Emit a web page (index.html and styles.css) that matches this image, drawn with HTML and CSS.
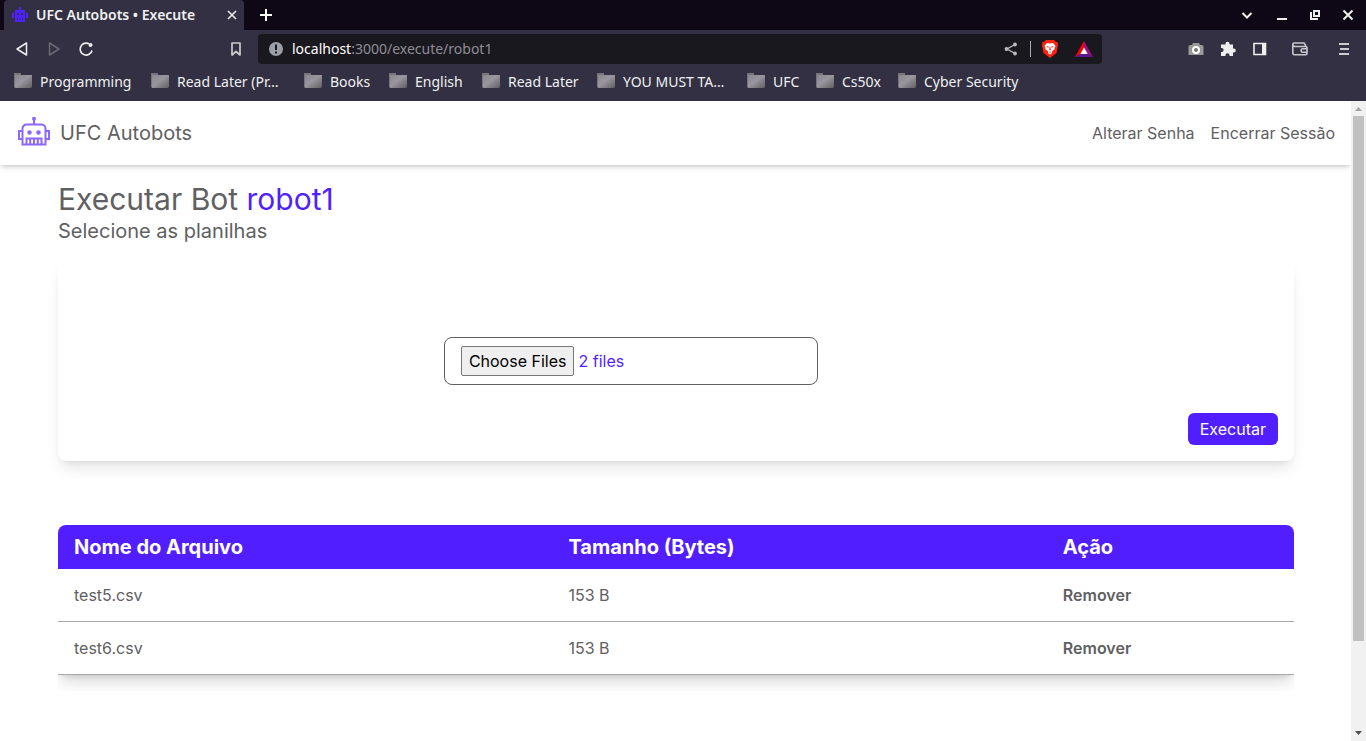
FILE: index.html
```html
<!DOCTYPE html>
<html lang="pt-BR">
<head>
<meta charset="utf-8">
<title>UFC Autobots • Execute</title>
<link rel="stylesheet" href="styles.css">
</head>
<body>
<svg class="defs" width="0" height="0" aria-hidden="true">
  <defs>
    <linearGradient id="folder-fill" x1="0" y1="0" x2="1" y2="1"><stop offset="0" stop-color="#8a8790"/><stop offset=".45" stop-color="#99969f"/><stop offset="1" stop-color="#5f5e5f"/></linearGradient>
    <symbol id="folder" viewBox="0 0 18 16"><path d="M0 0h7v2h10v13H1L0 14z" fill="#77757b"/><path d="M1 2h17V14l-1 1H1z" fill="url(#folder-fill)"/></symbol>
  </defs>
</svg>
<header class="browser">
  <div class="tabs">
    <div class="tab">
      <svg width="16" height="16" viewBox="0 0 16 16" fill="#4f1fff"><path d="M7 0h2v3h4v12H3V3h4zM0 6h2v5H0zM14 6h2v5h-2z"/><path d="M5 6h2v2H5zM9 6h2v2H9zM5 11h1v2H5zM7.500 11h1v2h-1zM10 11h1v2h-1z" fill="#302b68"/></svg>
      <span class="tab-title">UFC Autobots • Execute</span>
      <button class="icon-btn" aria-label="Close tab"><svg width="10" height="10" viewBox="0 0 10 10" fill="none" stroke="#eee" stroke-width="1.600"><path d="M1 1l8 8M9 1L1 9"/></svg></button>
    </div>
    <button class="icon-btn new-tab" aria-label="New tab"><svg width="12" height="12" viewBox="0 0 12 12" stroke="#fff" stroke-width="2"><path d="M6 0v12M0 6h12"/></svg></button>
    <div class="window-controls">
      <button class="icon-btn" aria-label="Tabs"><svg width="12" height="12" viewBox="0 0 12 12" fill="none" stroke="#eee" stroke-width="2"><path d="M1.500 4L6 8.500 10.500 4"/></svg></button>
      <button class="icon-btn" aria-label="Minimize"><svg width="12" height="12" viewBox="0 0 12 12" fill="#eee"><path d="M1 9h10v2H1z"/></svg></button>
      <button class="icon-btn" aria-label="Restore"><svg width="12" height="12" viewBox="0 0 12 12" fill="none" stroke="#eee" stroke-width="2"><path d="M5 2h5v5H5z"/><path d="M2 3v7h7"/></svg></button>
      <button class="icon-btn" aria-label="Close"><svg width="12" height="12" viewBox="0 0 12 12" fill="none" stroke="#eee" stroke-width="2"><path d="M1.500 1.500l9 9M10.500 1.500l-9 9"/></svg></button>
    </div>
  </div>
  <div class="toolbar">
    <div class="nav-buttons">
      <button class="icon-btn" aria-label="Back"><svg width="16" height="16" viewBox="0 0 16 16" fill="none" stroke="#eee" stroke-width="1.500" stroke-linejoin="round"><path d="M12.500 2v12L3 8z"/></svg></button>
      <button class="icon-btn" aria-label="Forward"><svg width="16" height="16" viewBox="0 0 16 16" fill="none" stroke="#6b6976" stroke-width="1.500" stroke-linejoin="round"><path d="M3.500 2v12L13 8z"/></svg></button>
      <button class="icon-btn" aria-label="Reload"><svg width="16" height="16" viewBox="0 0 16 16" fill="none" stroke="#eee" stroke-width="1.700"><path d="M11 2.800A6 6 0 1 0 14 9.500"/><circle cx="12.500" cy="4" r="2" fill="#eee" stroke="none"/></svg></button>
      <button class="icon-btn bookmark-btn" aria-label="Bookmark"><svg width="16" height="16" viewBox="0 0 16 16" fill="none" stroke="#ccc" stroke-width="1.700" stroke-linejoin="round"><path d="M4 2h8v12l-4-3.500L4 14z"/></svg></button>
    </div>
    <div class="url-bar">
      <svg width="14" height="14" viewBox="0 0 14 14"><circle cx="7" cy="7" r="7" fill="#9ca0a8"/><path d="M6 2.500h2v5.500H6zM6 9.500h2v2H6z" fill="#1a181f"/></svg>
      <span class="url"><b>localhost</b>:3000/execute/robot1</span>
      <button class="icon-btn" aria-label="Share"><svg width="14" height="14" viewBox="0 0 14 14" stroke="#bbb" stroke-width="1.400"><path d="M11 2.500L3 7l8 4.500" fill="none"/><circle cx="11" cy="2.500" r="1.200" fill="#bbb"/><circle cx="2.500" cy="7" r="1.200" fill="#bbb"/><circle cx="11" cy="11.500" r="1.200" fill="#bbb"/></svg></button>
      <i class="divider"></i>
      <button class="icon-btn" aria-label="Brave Shields"><svg width="16" height="18" viewBox="0 0 16 18"><path d="M4 0h8l2 2 1.500-.2.500 3.200-1.500 8L8 18l-6.500-5L0 5l.5-3.200L2 2z" fill="#f21"/><path d="M5 3l3 .6L11 3l2.500 3-1 2 .3 1-3 2.500L10 13l-2 1.600L6 13l.2-1.500-3-2.500.3-1-1-2z" fill="#fff"/><path d="M4.500 6l2.500.8-1 1.200zM11.500 6L9 6.800l1 1.200zM7.600 7h.8l.4 3L8 10.400 7.200 10zM6.800 12L8 11.600l1.200.4L8 12.800z" fill="#f21"/></svg></button>
      <button class="icon-btn rewards" aria-label="Rewards"><svg width="18" height="16" viewBox="0 0 18 16"><path d="M9 0L0 16l9-5z" fill="#f00"/><path d="M9 0l9 16-9-5z" fill="#9b1080"/><path d="M0 16h18l-5-3H5z" fill="#5c1690"/><path d="M9 6.500L12.700 13H5.300z" fill="#fff"/></svg></button>
    </div>
    <div class="extensions">
      <button class="icon-btn" aria-label="Screenshot"><svg width="16" height="16" viewBox="0 0 16 16"><path d="M2 4h2l1-2h6l1 2h2l1.500 1v9H.5V5z" fill="#999"/><circle cx="8" cy="9" r="3" fill="#777" stroke="#fff" stroke-width="2"/></svg></button>
      <button class="icon-btn" aria-label="Extensions"><svg width="16" height="16" viewBox="0 0 16 16" fill="#eee"><path d="M1 3.500h4.500V2.700a2 2 0 0 1 4 0v.8H13v4h.8a2 2 0 0 1 0 4H13V15H9.500v-.8a2 2 0 0 0-4 0v.8H1v-4h.6a2 2 0 0 0 0-4H1z"/></svg></button>
      <button class="icon-btn" aria-label="Sidebar"><svg width="16" height="16" viewBox="0 0 16 16"><path d="M2 2.500h11.500v11H2z" fill="none" stroke="#eee" stroke-width="1.600"/><path d="M10 2h4v12h-4z" fill="#eee"/></svg></button>
      <button class="icon-btn wallet" aria-label="Wallet"><svg width="16" height="16" viewBox="0 0 16 16" fill="none" stroke="#c8c7cc" stroke-width="1.600"><path d="M13.500 5.500V4L12 2H2.200A1.400 1.400 0 0 0 .8 3.400V12c0 1.100.7 1.700 1.700 1.700h11c.9 0 1.500-.6 1.500-1.500V6.700c0-.8-.5-1.200-1.200-1.200H3C1.700 5.500.8 4.900.8 3.600"/><path d="M15 7.800h-4.200a1.700 1.700 0 0 0 0 3.400H15"/></svg></button>
      <button class="icon-btn menu" aria-label="Menu"><svg width="10" height="12" viewBox="0 0 10 12" fill="#ccc"><path d="M0 0h10v2H0zM1 5h9v2H1zM0 10h10v2H0z"/></svg></button>
    </div>
  </div>
  <nav class="bookmarks" aria-label="Bookmarks">
    <a href="#" class="w-1"><svg width="18" height="16"><use href="#folder"/></svg>Programming</a>
    <a href="#" class="w-2"><svg width="18" height="16"><use href="#folder"/></svg>Read Later (Pr…</a>
    <a href="#" class="w-3"><svg width="18" height="16"><use href="#folder"/></svg>Books</a>
    <a href="#" class="w-4"><svg width="18" height="16"><use href="#folder"/></svg>English</a>
    <a href="#" class="w-5"><svg width="18" height="16"><use href="#folder"/></svg>Read Later</a>
    <a href="#" class="w-6"><svg width="18" height="16"><use href="#folder"/></svg>YOU MUST TA…</a>
    <a href="#" class="w-7"><svg width="18" height="16"><use href="#folder"/></svg>UFC</a>
    <a href="#" class="w-8"><svg width="18" height="16"><use href="#folder"/></svg>Cs50x</a>
    <a href="#"><svg width="18" height="16"><use href="#folder"/></svg>Cyber Security</a>
  </nav>
</header>
<div class="viewport">
  <div class="page">
    <nav class="site-nav">
      <a href="#" class="brand">
        <svg width="32" height="32" viewBox="0 0 32 32" fill="none" stroke="#8b66ff" stroke-width="2"><path d="M16 3v5"/><circle cx="16" cy="1.800" r="2" fill="#8b66ff" stroke="none"/><path d="M4.500 27.500V11.500a4 4 0 0 1 4-4h15a4 4 0 0 1 4 4v16z"/><path d="M4 14H1v8h3M28 14h3v8h-3"/><circle cx="11.500" cy="15.500" r="2.200" fill="#8b66ff" stroke="none"/><circle cx="20.500" cy="15.500" r="2.200" fill="#8b66ff" stroke="none"/><path d="M8.500 27.500v-6h15v6M12.200 21.500v6M16 21.500v6M19.800 21.500v6"/></svg>
        <span>UFC Autobots</span>
      </a>
      <div class="links"><a href="#">Alterar Senha</a><a href="#">Encerrar Sessão</a></div>
    </nav>
    <main class="content">
      <h1>Executar Bot <span class="accent">robot1</span></h1>
      <h2>Selecione as planilhas</h2>
      <form class="card">
        <div class="picker"><input class="file-input" id="files" type="file" multiple accept=".csv" lang="en" aria-label="Planilhas"></div>
        <button class="run" type="button">Executar</button>
      </form>
      <div class="table-wrap">
        <table>
          <thead><tr><th class="wide">Nome do Arquivo</th><th class="wide">Tamanho (Bytes)</th><th>Ação</th></tr></thead>
          <tbody>
            <tr><td>test5.csv</td><td>153 B</td><td><button class="remove">Remover</button></td></tr>
            <tr><td>test6.csv</td><td>153 B</td><td><button class="remove">Remover</button></td></tr>
          </tbody>
        </table>
      </div>
    </main>
  </div>
  <div class="scrollbar" aria-hidden="true">
    <svg width="15" height="15" viewBox="0 0 15 15"><path d="M4 10h7L7.500 6z" fill="#a3a3a3"/></svg>
    <div class="track"><div class="thumb"></div></div>
    <svg width="15" height="15" viewBox="0 0 15 15"><path d="M4 5h7L7.500 9z" fill="#505050"/></svg>
  </div>
</div>
<script src="script.js"></script>
</body>
</html>
```
FILE: styles.css
```css
* { box-sizing: border-box; }
body { margin: 0; height: 100vh; display: flex; flex-direction: column; background: #fff; color: #5f6062; font: 16px/24px Inter, "Liberation Sans", sans-serif; }
a { color: inherit; text-decoration: none; }
button { font: inherit; color: inherit; border: 0; background: none; padding: 0; }
svg { display: block; flex: none; }
.defs { position: absolute; }

.browser { flex: none; background: #323042; color: #f0f0f2; font: 14px/20px "Noto Sans", "Open Sans", sans-serif; }
.icon-btn { display: flex; align-items: center; justify-content: center; flex: none; width: 16px; height: 16px; }
.tabs { display: flex; align-items: center; height: 30px; padding: 0 10px 0 4px; background: #0e0816; }
.tab { display: flex; align-items: center; gap: 8px; width: 240px; height: 30px; padding: 0 4px 0 8px; background: #323042; border-radius: 4px 4px 0 0; }
.tab-title { flex: 1; font-weight: 600; white-space: nowrap; }
.new-tab { margin-left: 14px; }
.window-controls { display: flex; gap: 17px; margin-left: auto; }
.window-controls .icon-btn:first-child { margin-right: 2px; }
.toolbar { display: flex; align-items: center; height: 38px; }
.nav-buttons { display: flex; gap: 16px; width: 258px; padding: 0 14px; }
.bookmark-btn { margin-left: auto; }
.url-bar { display: flex; align-items: center; flex: 1; height: 30px; padding: 0 10px 0 11px; border-radius: 4px; background: #1a181f; }
.url { flex: 1; margin-left: 9px; color: #8e8d96; }
.url b { font-weight: 400; color: #fff; }
.divider { width: 1px; height: 16px; margin: 0 11px; background: #aaa; }
.rewards { margin-left: 18px; }
.extensions { display: flex; justify-content: flex-end; align-items: center; gap: 16px; width: 264px; padding-right: 14px; }
.wallet { margin-left: 8px; }
.menu { margin-left: 12px; }
.bookmarks { display: flex; height: 33px; padding: 4px 14px 0; white-space: nowrap; }
.bookmarks a { display: flex; align-items: flex-start; gap: 8px; height: 20px; }
.bookmarks svg { margin-top: 1px; }
.w-1 { width: 137px; }
.w-2 { width: 153px; }
.w-3 { width: 85px; }
.w-4 { width: 93px; }
.w-5 { width: 115px; }
.w-6 { width: 150px; }
.w-7 { width: 69px; }
.w-8 { width: 82px; }

.viewport { display: flex; flex: 1; min-height: 0; }
.page { flex: 1; min-width: 0; overflow: hidden; }
.site-nav { display: flex; justify-content: space-between; align-items: center; height: 64px; padding: 0 16px 0 18px; box-shadow: 0 4px 6px -1px rgba(0, 0, 0, .1), 0 2px 4px -2px rgba(0, 0, 0, .2); }
.brand { display: flex; align-items: center; gap: 10px; font-size: 20px; line-height: 28px; }
.links { display: flex; gap: 16px; }
.content { padding: 16px 57px 0 58px; }
h1, h2 { margin: 0; font-weight: 400; }
h1 { font-size: 30px; line-height: 36px; }
h2 { font-size: 20px; line-height: 28px; }
.accent { color: #511fff; }
.card { display: flex; align-items: flex-end; min-height: 200px; margin-top: 16px; padding: 16px; border-radius: 8px; box-shadow: 0 10px 15px -3px rgba(0, 0, 0, .1), 0 4px 6px -4px rgba(0, 0, 0, .1); }
.picker { display: flex; flex: 1; align-self: stretch; align-items: center; justify-content: center; }
.file-input { width: 374px; height: 48px; padding: 8px 16px; border: 1px solid #5f6062; border-radius: 8px; font: inherit; color: #511fff; }
.file-input::file-selector-button { height: 30px; padding: 1px 7px; border: 1px solid #767676; border-radius: 2px; background: #efefef; color: #000; font: inherit; }
.run { height: 32px; padding: 0 12px; border-radius: 6px; background: #511fff; color: #fff; }
.table-wrap { margin-top: 64px; padding-bottom: 16px; overflow: hidden; border-radius: 8px 8px 0 0; }
table { width: 100%; table-layout: fixed; border-collapse: separate; border-spacing: 0; text-align: left; box-shadow: 0 10px 15px -3px rgba(0, 0, 0, .15), 0 4px 6px -4px rgba(0, 0, 0, .15); }
th { padding: 8px 16px; background: #511fff; color: #fff; font-size: 20px; line-height: 28px; font-weight: 700; }
.wide { width: 40%; }
td { height: 53px; padding: 0 16px; border-bottom: 1px solid #a8a8a8; }
.remove { font-weight: 600; }
.scrollbar { display: flex; flex-direction: column; width: 15px; background: #f1f1f1; }
.track { flex: 1; padding: 0 2px; }
.thumb { height: 86%; background: #c1c1c1; }
```
FILE: script.js
```js
const picked = new DataTransfer();
for (const name of ["test5.csv", "test6.csv"]) {
  picked.items.add(new File(["x".repeat(153)], name, { type: "text/csv" }));
}
document.getElementById("files").files = picked.files;
```
